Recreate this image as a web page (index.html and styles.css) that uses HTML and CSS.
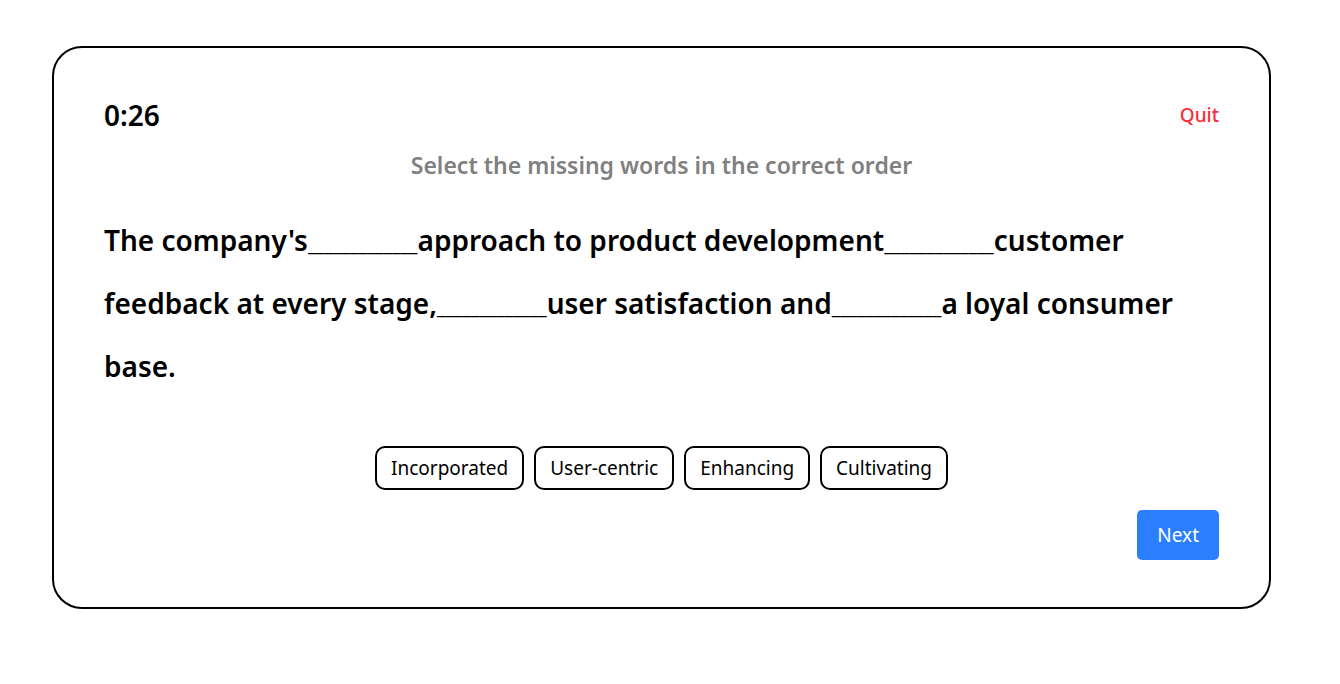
FILE: index.html
```html
<!DOCTYPE html>
<html lang="en">
<head>
<meta charset="utf-8">
<title>Fill in the blanks</title>
<link rel="stylesheet" href="styles.css">
</head>
<body>
<main class="quiz">
  <header class="quiz-header">
    <span class="timer">0:26</span>
    <button class="quit" type="button">Quit</button>
  </header>
  <h1 class="instruction">Select the missing words in the correct order</h1>
  <p class="sentence">The company's<span class="blank">_____________</span>approach to product development<span class="blank">_____________</span>customer feedback at every stage,<span class="blank">_____________</span>user satisfaction and<span class="blank">_____________</span>a loyal consumer base.</p>
  <div class="options">
    <button class="option" type="button">Incorporated</button>
    <button class="option" type="button">User-centric</button>
    <button class="option" type="button">Enhancing</button>
    <button class="option" type="button">Cultivating</button>
  </div>
  <footer class="quiz-footer">
    <button class="next" type="button">Next</button>
  </footer>
</main>
</body>
</html>
```

FILE: styles.css
```css
* {
  box-sizing: border-box;
}

body {
  margin: 0;
  padding: 46px 69px 46px 52px;
  background: #fff;
  color: #000;
  font-family: "Segoe UI", "Noto Sans", "Open Sans", sans-serif;
}

button {
  font: inherit;
  cursor: pointer;
}

.quiz {
  padding: 47px 50px;
  border: 2px solid #000;
  border-radius: 30px;
}

.quiz-header {
  display: flex;
  align-items: center;
  justify-content: space-between;
  height: 40px;
}

.timer {
  font-size: 28px;
  font-weight: 600;
}

.quit {
  padding: 0;
  border: 0;
  background: none;
  color: #fb2c36;
  font-size: 19px;
  font-weight: 500;
}

.instruction {
  margin: 12px 0 0;
  color: #808080;
  font-size: 23px;
  font-weight: 600;
  line-height: 36px;
  text-align: center;
}

.sentence {
  margin: 26px 0 0;
  font-size: 28px;
  font-weight: 600;
  line-height: 63px;
}

.blank {
  font-size: 19px;
  font-weight: 400;
  line-height: 1;
}

.options {
  display: flex;
  flex-wrap: wrap;
  justify-content: center;
  gap: 10px;
  margin-top: 48px;
}

.option {
  height: 44px;
  padding: 0 14px;
  border: 2px solid #000;
  border-radius: 10px;
  background: #fff;
  color: #000;
  font-size: 19px;
}

.quiz-footer {
  display: flex;
  justify-content: flex-end;
  margin-top: 20px;
}

.next {
  height: 50px;
  padding: 0 20px;
  border: 0;
  border-radius: 5px;
  background: #2b7fff;
  color: #fff;
  font-size: 19px;
}
```
